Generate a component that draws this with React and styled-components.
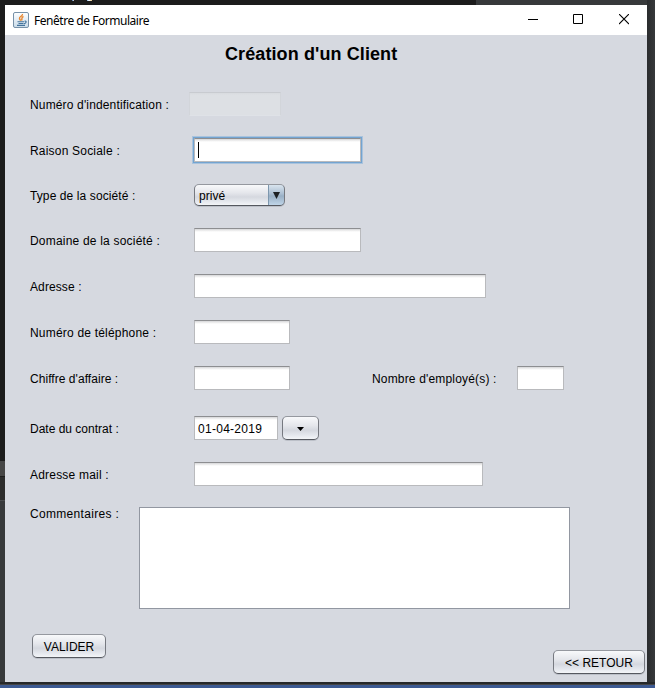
import React from 'react';
import styled, { createGlobalStyle, css } from 'styled-components';

const Global = createGlobalStyle`
  * { box-sizing: border-box; }
  body { margin: 0; background: #37393b; font-family: "Liberation Sans", Arial, sans-serif; font-size: 12px; color: #000; overflow: hidden; }
  button, input, textarea { font: inherit; color: inherit; margin: 0; outline: none; }
`;

const Desktop = styled.div`
  width: 655px;
  height: 688px;
  padding: 5px 8px 0 5px;
  overflow: hidden;
  background:
    linear-gradient(90deg, #3567b0, #e8e0d0) 72px 0 / 2px 1px no-repeat,
    linear-gradient(90deg, #7fb0e0, #fff 40%, #e0c080) 87px 0 / 5px 1px no-repeat,
    linear-gradient(#26282a, #26282a) 0 682px / 100% 2px no-repeat,
    linear-gradient(#454545, #454545) 0 684px / 100% 1px no-repeat,
    linear-gradient(#3d5a92, #3d5a92) 0 685px / 100% 3px no-repeat,
    linear-gradient(#464646, #464646) 0 461px / 5px 15px no-repeat,
    linear-gradient(#4a4c4e, #4a4c4e) 0 500px / 5px 1px no-repeat,
    linear-gradient(#2c2c2c, #2c2c2c) 0 477px / 5px 23px no-repeat,
    linear-gradient(#1c1c1c, #1c1c1c) 0 0 / 5px 477px no-repeat,
    linear-gradient(#1c1c1c, #1c1c1c) 0 0 / 476px 5px no-repeat,
    linear-gradient(90deg, #2a2c2e, #37393b) 647px 0 / 8px 682px no-repeat,
    #37393b;
`;

const Window = styled.main`
  width: 642px;
  height: 677px;
  background: #d6d9e0;
`;

const TitleBar = styled.header`
  display: flex;
  align-items: center;
  height: 30px;
  padding-left: 8px;
  background: #fff;
`;

const WindowTitle = styled.span`
  flex: 1;
  padding-left: 5px;
  font-family: "Noto Sans", "Open Sans", sans-serif;
  font-size: 12px;
  letter-spacing: ${p => p.$tracking}px;
`;

const WindowControl = styled.span`
  display: flex;
  justify-content: center;
  width: 46px;
  padding-left: ${p => p.$shift || 0}px;
  svg { display: block; }
`;

const Heading = styled.h1`
  margin: 0;
  padding: 9px 0 0 220px;
  height: 57px;
  font-size: 18px;
  line-height: 21px;
  letter-spacing: ${p => p.$tracking}px;
  white-space: nowrap;
`;

const Row = styled.div`
  display: flex;
  align-items: center;
  height: 24px;
  margin-bottom: ${p => p.$after}px;
  padding-left: 25px;
`;

const Label = styled.label`
  flex: none;
  width: ${p => p.$width || 164}px;
  line-height: 14px;
  padding-top: 1px;
  letter-spacing: ${p => p.$tracking || 0}px;
  white-space: nowrap;
`;

const Field = styled.input`
  flex: none;
  width: ${p => p.$width}px;
  height: 24px;
  margin-right: ${p => p.$after || 0}px;
  padding: 1px 3px 0;
  border: 1px solid #b9babd;
  border-top-color: #8d8e91;
  border-radius: 0;
  background: linear-gradient(#d5d6d8, #f4f4f4 2px, #fff 3px);
  letter-spacing: 0.28px;
  &:disabled {
    border-color: #d2d5da #d2d5da #dfe2e7;
    border-top-color: #c8cbd0;
    background: linear-gradient(#d8dbdf, #dde0e4 2px);
  }
`;

const FocusField = styled.div`
  display: flex;
  align-items: center;
  width: 167px;
  height: 24px;
  padding-left: 3px;
  border: 1px solid #b9babd;
  border-top-color: #8d8e91;
  background: linear-gradient(#d5d6d8, #f4f4f4 2px, #fff 3px);
  box-shadow: 0 0 0 1px #73a4d1, 0 0 0 2px #a9c3dd;
`;

const Caret = styled.span`
  width: 1px;
  height: 16px;
  background: #000;
`;

const raised = css`
  border: 1px solid #8b8e95;
  border-color: #95989f #767980 #55585f;
  border-radius: 5px;
  background: linear-gradient(#f8f9fb, #e4e6eb 40%, #d5d8df 60%, #e3e6ec 80%, #f3f5f8);
  box-shadow: 0 1px 0 #bcc0c8;
`;

const Combo = styled.div`
  display: flex;
  align-items: center;
  width: 91px;
  height: 22px;
  padding-left: 4px;
  overflow: hidden;
  ${raised}
`;

const ComboValue = styled.span`
  padding-top: 2px;
  letter-spacing: 0.05px;
`;

const ComboArrow = styled.span`
  display: flex;
  align-items: center;
  justify-content: center;
  width: 17px;
  height: 22px;
  margin-left: auto;
  margin-right: -1px;
  border: 1px solid #3d566f;
  border-left-color: #7d97ae;
  border-top-color: #8193a5;
  border-radius: 0 5px 5px 0;
  background: linear-gradient(#d9e4ee, #a9bdd1 45%, #98afc5 55%, #c0d5e8);
`;

const Button = styled.button`
  display: flex;
  align-items: center;
  justify-content: center;
  width: ${p => p.$width}px;
  height: 24px;
  padding: 1px 0 0;
  white-space: nowrap;
  ${raised}
`;

const CommentRow = styled(Row)`
  align-items: flex-start;
  height: 102px;
  margin-bottom: 25px;
  ${Label} { padding-top: 0; }
`;

const Comment = styled.textarea`
  width: 431px;
  height: 102px;
  border: 1px solid #9297a1;
  background: #fff;
  resize: none;
`;

const Actions = styled.footer`
  display: flex;
  align-items: flex-start;
  justify-content: space-between;
  padding: 0 2px 0 27px;
  & > :last-child { margin-top: 16px; }
`;

const JavaIcon = () => (
  <svg width="16" height="16" viewBox="0 0 16 16" fill="none">
    <defs>
      <linearGradient id="tile" x1="0" y1="0" x2="0" y2="1">
        <stop offset="0" stopColor="#fff" />
        <stop offset="1" stopColor="#c9dbe9" />
      </linearGradient>
    </defs>
    <rect x=".5" y=".5" width="15" height="15" rx="1.5" fill="url(#tile)" stroke="#7791a8" />
    <path d="M9.5 2C10 4 6 4.500 6.500 6.500C6.700 7.500 7.500 7.800 7.500 8.800M10.500 4.500C7.500 5.500 9.800 6.500 8.500 8.500" stroke="#e8862e" strokeWidth="1.400" />
    <path d="M4.500 9.800h6.500M5.500 11.500h5M4 13.400h8M11.500 9.200c2.500-.5 2 2-.5 2.500" stroke="#44749c" strokeWidth="1.100" />
  </svg>
);

const Arrow = ({ w, h, color }) => (
  <svg width={w} height={h} viewBox="0 0 8 7" preserveAspectRatio="none">
    <path d="M0 0h8L4 7z" fill={color} />
  </svg>
);

export default function App() {
  return (
    <Desktop>
      <Global />
      <Window>
        <TitleBar>
          <JavaIcon />
          <WindowTitle $tracking={-0.47}>Fenêtre de Formulaire</WindowTitle>
          <WindowControl $shift={2}>
            <svg width="10" height="11"><path d="M0 4.500h10" stroke="#000" /></svg>
          </WindowControl>
          <WindowControl>
            <svg width="10" height="12"><path d="M.5.5h9v9h-9z" fill="none" stroke="#000" /></svg>
          </WindowControl>
          <WindowControl>
            <svg width="10" height="12"><path d="M0 0l10 10M10 0L0 10" stroke="#000" strokeWidth="1.100" /></svg>
          </WindowControl>
        </TitleBar>
        <Heading $tracking={0.1}>Création d'un Client</Heading>
        <Row $after={22}>
          <Label $width={159} $tracking={0.15}>Numéro d'indentification :</Label>
          <Field $width={92} disabled />
        </Row>
        <Row $after={21}>
          <Label $tracking={0.2}>Raison Sociale :</Label>
          <FocusField><Caret /></FocusField>
        </Row>
        <Row $after={21}>
          <Label $tracking={0.1}>Type de la société :</Label>
          <Combo>
            <ComboValue>privé</ComboValue>
            <ComboArrow><Arrow w={7} h={7} color="#1c2023" /></ComboArrow>
          </Combo>
        </Row>
        <Row $after={22}>
          <Label $tracking={0.2}>Domaine de la société :</Label>
          <Field $width={167} />
        </Row>
        <Row $after={22}>
          <Label $tracking={0.1}>Adresse :</Label>
          <Field $width={292} />
        </Row>
        <Row $after={22}>
          <Label $tracking={0.2}>Numéro de téléphone :</Label>
          <Field $width={96} />
        </Row>
        <Row $after={26}>
          <Label $tracking={0.05}>Chiffre d'affaire :</Label>
          <Field $width={96} $after={82} />
          <Label $width={145} $tracking={0.17}>Nombre d'employé(s) :</Label>
          <Field $width={47} />
        </Row>
        <Row $after={22}>
          <Label>Date du contrat :</Label>
          <Field $width={84} $after={4} defaultValue="01-04-2019" />
          <Button $width={37}><Arrow w={7} h={4} color="#000" /></Button>
        </Row>
        <Row $after={21}>
          <Label $tracking={0.2}>Adresse mail :</Label>
          <Field $width={289} />
        </Row>
        <CommentRow>
          <Label $width={109} $tracking={0.32}>Commentaires :</Label>
          <Comment />
        </CommentRow>
        <Actions>
          <Button $width={74}>VALIDER</Button>
          <Button $width={92}>&lt;&lt; RETOUR</Button>
        </Actions>
      </Window>
    </Desktop>
  );
}
